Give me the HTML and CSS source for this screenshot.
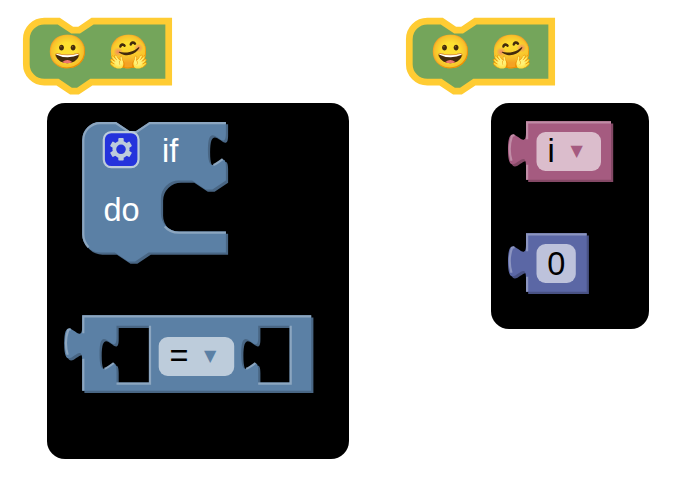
FILE: index.html
```html
<!DOCTYPE html>
<html lang="en">
<head>
<meta charset="utf-8">
<title>Blocks</title>
<link rel="stylesheet" href="styles.css">
</head>
<body>
<svg class="defs" width="0" height="0" aria-hidden="true">
  <defs>
    <path id="emoji-shape" d="M0 18A18 18 0 0 1 18 0H32.5l13.500 9h6.700l13.500-9H142.400V61H65l-13.500 9h-6.700l-13.500-9H18A18 18 0 0 1 0 43Z"/>
    <path id="if-shape" d="M0 18A18 18 0 0 1 18 0H33.7l13.500 9h6.800l13.500-9H143.700V11.200c0 22.500-18-18-18 16.900s18-5.600 18 16.900V58.500l-13.500 9h-6.800l-13.500-9h-13.200a18 18 0 0 0-18 18V91.500a18 18 0 0 0 18 18H143.700V130.500H66.400l-13.500 9h-6.800l-13.500-9H18A18 18 0 0 1 0 112.500Z"/>
    <path id="equals-shape" fill-rule="evenodd" d="M0 0H229V75.500H0V45c0-22.500-18 18-18-16.900s18 5.600 18-16.900ZM34.300 10.500H66.700V67.200H34.300V55.500c0-22.500-17 18-17-16.900s17 5.600 17-16.900ZM176 10.500H207.400V67.200H176V55.500c0-22.500-17 18-17-16.900s17 5.600 17-16.900Z"/>
    <path id="i-shape" d="M0 0H85V58.500H0V45c0-22.500-18 18-18-16.900s18 5.600 18-16.900Z"/>
    <path id="zero-shape" d="M0 0H60.700V58.500H0V45c0-22.500-18 18-18-16.900s18 5.600 18-16.900Z"/>
  </defs>
</svg>
<main class="workspace">
  <section class="column">
    <svg class="emoji-block" width="152" height="79" viewBox="-4.300 -4.200 152 79">
      <use href="#emoji-shape"/>
      <text x="20.500" y="41.400">😀</text><text x="81.500" y="41.400">🤗</text>
    </svg>
    <div class="panel logic">
      <svg class="block if-block" width="147" height="143" viewBox="-0.200 0 147 143">
        <use class="dark" href="#if-shape" x="2.2" y="2.2"/>
        <use class="base" href="#if-shape"/>
        <path class="light" d="M6.300 125.200Q1.100 119 1.100 112.500V18A17 17 0 0 1 18 1.100H33.700l13.500 9h6.800l13.500-9H143.700M131.200 43q3-1 9.300-5.800M82.500 104.500q5 6.200 14.500 6.200H143.700"/>
        <rect class="gear-box" x="21.600" y="10.100" width="34.700" height="35" rx="7.500"/>
        <g class="gear" transform="translate(38.800 27.300)">
          <circle class="ring" r="6.700"/>
          <g id="teeth"><rect x="-2.700" y="-11.200" width="5.400" height="5" rx=".8"/><rect x="-2.700" y="6.200" width="5.400" height="5" rx=".8"/></g>
          <use href="#teeth" transform="rotate(60)"/><use href="#teeth" transform="rotate(120)"/>
        </g>
        <text class="label" x="79.800" y="40.300">if</text>
        <text class="label" x="21.200" y="99">do</text>
      </svg>
      <svg class="block equals-block" width="252" height="80" viewBox="-19.200 -0.300 252 80">
        <use class="dark" href="#equals-shape" x="2.2" y="2.2"/>
        <use class="base" href="#equals-shape"/>
        <path class="light" d="M1.100 75.500V43.500M-14.500 39.500Q-18.300 27-14 14.500L-11.500 13.800M1.100 18V1.100H229M67.800 10.500V68.300H34.300M22.300 53.500q3-1 9.300-5.800M208.500 10.500V68.300H176M164 53.500q3-1 9.300-5.800"/>
        <rect class="field" x="76.500" y="21.700" width="75.500" height="39" rx="9"/>
        <text class="value" x="87.400" y="51.300">=</text>
        <text class="arrow" x="128" y="45.600">▼</text>
      </svg>
    </div>
  </section>
  <section class="column">
    <svg class="emoji-block" width="152" height="79" viewBox="-4.300 -4.200 152 79">
      <use href="#emoji-shape"/>
      <text x="20.500" y="41.400">😀</text><text x="81.500" y="41.400">🤗</text>
    </svg>
    <div class="panel values">
      <svg class="block variable-block" width="108" height="62" viewBox="-19 -0.300 108 62">
        <use class="dark" href="#i-shape" x="2.2" y="2.2"/>
        <use class="base" href="#i-shape"/>
        <path class="light" d="M1.100 58.500V43.500M-14.500 39.500Q-18.300 27-14 14.500L-11.500 13.800M1.100 18V1.100H85"/>
        <rect class="field" x="10.500" y="10.700" width="64.500" height="39" rx="9"/>
        <text class="value" x="21.400" y="41">i</text>
        <text class="arrow" x="50.600" y="34.500">▼</text>
      </svg>
      <svg class="block number-block" width="84" height="62" viewBox="-19 -0.300 84 62">
        <use class="dark" href="#zero-shape" x="2.2" y="2.2"/>
        <use class="base" href="#zero-shape"/>
        <path class="light" d="M1.100 58.500V43.500M-14.500 39.500Q-18.300 27-14 14.500L-11.500 13.800M1.100 18V1.100H60.700"/>
        <rect class="field" x="10.500" y="10.700" width="39.300" height="39" rx="9"/>
        <text class="value" x="21.200" y="41.600">0</text>
      </svg>
    </div>
  </section>
</main>
</body>
</html>
```
FILE: styles.css
```css
* { box-sizing: border-box; }
body { margin: 0; background: #fff; font-family: "Liberation Sans", sans-serif; overflow: hidden; }
.defs { display: none; }
.workspace { display: grid; grid-template-columns: 383px 294px; height: 480px; padding-top: 17px; }
.column { display: flex; flex-direction: column; align-items: flex-start; }
svg { display: block; flex: none; }
.block { overflow: visible; }
.emoji-block { margin-left: 22px; fill: #74a55b; stroke: #fc3; stroke-width: 6.7; }
.emoji-block text { stroke: none; font-size: 33px; }
.panel { display: flex; flex-direction: column; align-items: flex-start; background: #000; border-radius: 18px; margin-top: 7px; }
.logic { width: 302px; height: 356px; margin-left: 47px; padding: 19px 0 0 18px; --base: #5b80a5; --dark: #496684; --light: #8ca6c0; }
.values { width: 158px; height: 226px; margin-left: 108px; padding: 18px 0 0 16px; }
.if-block { margin-left: 17px; }
.equals-block { margin-top: 50px; margin-left: -2px; }
.variable-block { --base: #a55b80; --dark: #844966; --light: #c08ca6; }
.number-block { margin-top: 50px; --base: #5b67a5; --dark: #495284; --light: #8c95c0; }
.base, .arrow { fill: var(--base); }
.arrow { font-family: "DejaVu Sans", sans-serif; font-size: 16px; text-anchor: middle; }
.dark { fill: var(--dark); }
.light { fill: none; stroke: var(--light); stroke-width: 2.2; }
.field { fill: #fff; opacity: .6; }
.label { font-size: 32.5px; fill: #fff; }
.value { font-size: 32.5px; fill: #000; }
.gear-box { fill: #2533dc; stroke: #bdccdb; stroke-width: 2.2; }
.gear { fill: #bdccdb; }
.ring { fill: none; stroke: #bdccdb; stroke-width: 3.8; }
```
